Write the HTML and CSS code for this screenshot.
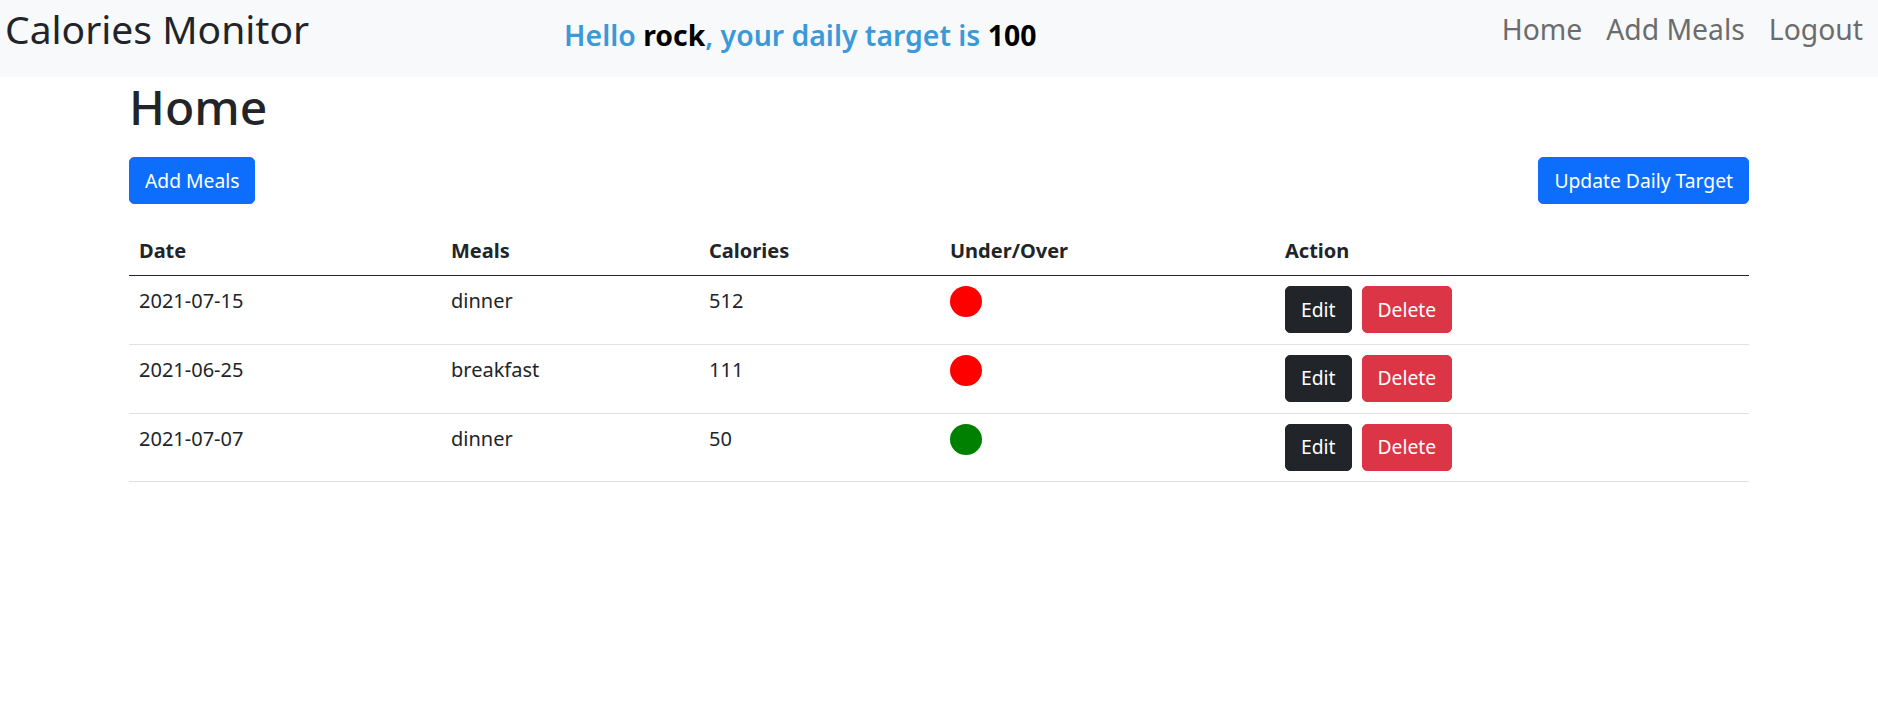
FILE: index.html
```html
<!DOCTYPE html>
<html lang="en">
<head>
<meta charset="utf-8">
<title>Calories Monitor</title>
<link rel="stylesheet" href="styles.css">
</head>
<body>
<nav class="navbar">
  <a class="brand" href="#">Calories Monitor</a>
  <div class="greeting">Hello <b>rock</b>, your daily target is <b>100</b></div>
  <ul class="nav">
    <li><a href="#">Home</a></li>
    <li><a href="#">Add Meals</a></li>
    <li><a href="#">Logout</a></li>
  </ul>
</nav>
<main class="container">
  <h1 class="title">Home</h1>
  <div class="toolbar">
    <button class="btn btn-primary">Add Meals</button>
    <button class="btn btn-primary">Update Daily Target</button>
  </div>
  <table class="table">
    <thead>
      <tr>
        <th class="c-date">Date</th>
        <th class="c-meal">Meals</th>
        <th class="c-cal">Calories</th>
        <th class="c-uo">Under/Over</th>
        <th class="c-act">Action</th>
      </tr>
    </thead>
    <tbody>
      <tr>
        <td>2021-07-15</td>
        <td>dinner</td>
        <td>512</td>
        <td><span class="dot dot-over"></span></td>
        <td><button class="btn btn-dark">Edit</button><button class="btn btn-danger">Delete</button></td>
      </tr>
      <tr>
        <td>2021-06-25</td>
        <td>breakfast</td>
        <td>111</td>
        <td><span class="dot dot-over"></span></td>
        <td><button class="btn btn-dark">Edit</button><button class="btn btn-danger">Delete</button></td>
      </tr>
      <tr>
        <td>2021-07-07</td>
        <td>dinner</td>
        <td>50</td>
        <td><span class="dot dot-under"></span></td>
        <td><button class="btn btn-dark">Edit</button><button class="btn btn-danger">Delete</button></td>
      </tr>
    </tbody>
  </table>
</main>
</body>
</html>
```

FILE: styles.css
```css
* { box-sizing: border-box; }

body {
  margin: 0;
  font-family: "Noto Sans", "Open Sans", sans-serif;
  font-size: 20px;
  line-height: 1.5;
  color: #212529;
  background: #fff;
}

.navbar {
  display: flex;
  align-items: flex-start;
  height: 77px;
  background: #f8f9fa;
  padding: 0 3px 0 5px;
}

.brand {
  font-size: 39px;
  line-height: 48px;
  padding-top: 5px;
  color: #212529;
  text-decoration: none;
  white-space: nowrap;
}

.greeting {
  margin-left: 255px;
  padding-top: 14px;
  font-size: 28.4px;
  line-height: 42px;
  font-weight: 600;
  color: #3a9ad9;
  white-space: nowrap;
}

.greeting b {
  font-weight: 700;
  color: #000;
}

.nav {
  display: flex;
  list-style: none;
  margin: 0 0 0 auto;
  padding: 8px 0 0;
}

.nav a {
  display: block;
  padding: 0 12px;
  font-size: 28.3px;
  line-height: 42px;
  color: #6b6c6d;
  text-decoration: none;
}

.container {
  width: 1650px;
  margin: 0 auto;
  padding: 0 15px;
}

.title {
  margin: 0 0 20px;
  font-size: 48px;
  font-weight: 500;
  line-height: 60px;
}

.toolbar {
  display: flex;
  justify-content: space-between;
  margin-bottom: 21px;
}

.btn {
  display: inline-block;
  font-family: inherit;
  font-size: 19.3px;
  line-height: 30px;
  padding: 7.5px 15px;
  border: 1px solid transparent;
  border-radius: 5px;
  color: #fff;
  cursor: pointer;
}

.btn-primary { background: #0d6efd; border-color: #0d6efd; }
.btn-dark { background: #212529; border-color: #212529; margin-right: 10px; }
.btn-danger { background: #dc3545; border-color: #dc3545; }

.table {
  width: 100%;
  border-collapse: collapse;
  color: #212529;
}

.table th,
.table td {
  text-align: left;
  vertical-align: top;
  padding: 10px;
}

.table th {
  font-weight: 700;
  padding-top: 11px;
  padding-bottom: 9px;
  border-bottom: 1.5px solid #212529;
}

.table td {
  border-bottom: 1.25px solid #dee2e6;
  padding-bottom: 10.75px;
}

.c-date { width: 312px; }
.c-meal { width: 258px; }
.c-cal { width: 241px; }
.c-uo { width: 335px; }

.dot {
  display: inline-block;
  width: 32px;
  height: 31px;
  border-radius: 50%;
  vertical-align: top;
}

.dot-over { background: #ff0000; }
.dot-under { background: #008000; }
```
